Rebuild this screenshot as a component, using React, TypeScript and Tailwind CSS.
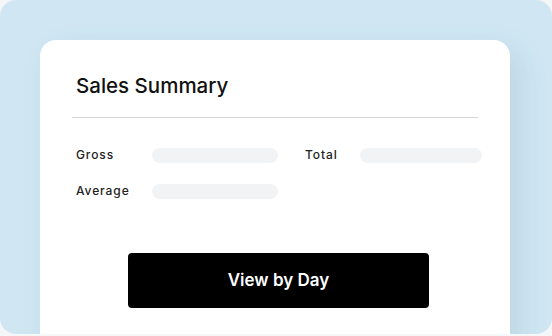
export default function App() {
  return (
    <div className="h-[336px] w-[552px] overflow-hidden bg-[#f4f6f7]">
      <div
        className="h-[334px] w-[552px] overflow-hidden rounded-[16px] bg-[#d0e7f3] pl-[40px] pt-[40px]"
        style={{ fontFamily: "Inter, 'Noto Sans', sans-serif" }}
      >
        <div className="h-[320px] w-[470px] rounded-[16px] bg-white px-8 pt-[32px] shadow-[10px_10px_30px_rgba(40,90,120,0.12)]">
          <h1 className="pl-1 text-[20.5px] font-medium leading-[28px] text-[#111]">
            Sales Summary
          </h1>
          <div className="mt-[17px] h-px w-full bg-[#d6d6d6]" />

          <div className="mt-[28px] flex items-center pl-1">
            <span className="w-[76px] shrink-0 text-[12px] font-medium tracking-[0.9px] text-[#222]">Gross</span>
            <div className="h-[15px] w-[126px] shrink-0 rounded-full bg-[#f2f3f5]" />
            <span className="ml-[27px] w-[55px] shrink-0 text-[12px] font-medium tracking-[0.9px] text-[#222]">Total</span>
            <div className="h-[15px] w-[122px] shrink-0 rounded-full bg-[#f2f3f5]" />
          </div>

          <div className="mt-[18px] flex items-center pl-1">
            <span className="w-[76px] shrink-0 text-[12px] font-medium tracking-[0.9px] text-[#222]">Average</span>
            <div className="h-[15px] w-[126px] shrink-0 rounded-full bg-[#f2f3f5]" />
          </div>

          <button className="mt-[53px] ml-[56px] flex h-[55px] w-[301px] items-center justify-center rounded-[4px] bg-black text-[17px] font-semibold text-white">
            View by Day
          </button>
        </div>
      </div>
    </div>
  );
}
